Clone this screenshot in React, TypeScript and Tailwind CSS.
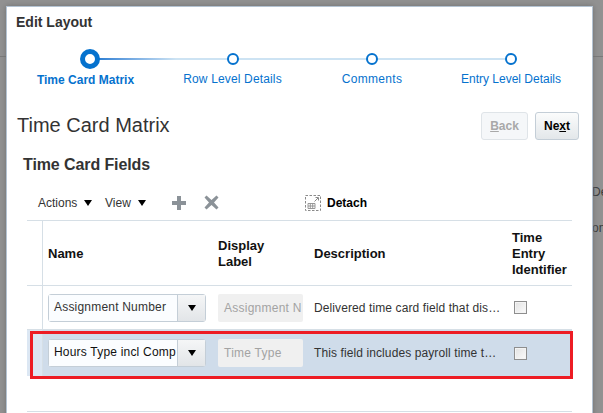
const FONT = "font-['Liberation_Sans',Arial,sans-serif]";

const STEPS = [
  { label: "Time Card Matrix", width: "w-[145px]", labelClass: "-translate-x-[4px] translate-y-[1px] font-bold" },
  { label: "Row Level Details", width: "w-[141px]", labelClass: "tracking-[0.15px]" },
  { label: "Comments", width: "w-[138px]", labelClass: "tracking-[0.3px]" },
  { label: "Entry Level Details", width: "w-[140px]", labelClass: "" },
];

function Stepper() {
  return (
    <div className="flex h-[49px] pl-[10px]">
      {STEPS.map((step, i) => (
        <div key={step.label} className={`relative flex shrink-0 flex-col items-center ${step.width}`}>
          {i === 0 && (
            <div className="absolute left-[72px] top-[10px] h-[2px] w-[145px] bg-gradient-to-r from-[#0572ce] via-[#cde3f3] via-60% to-[#cde3f3]" />
          )}
          {i > 0 && i < 3 && (
            <div className="absolute left-[70px] top-[10px] h-[2px] w-[140px] bg-[#cde3f3]" />
          )}
          <div className="relative flex h-[21px] items-center justify-center">
            {i === 0 ? (
              <div className="h-5 w-5 rounded-full border-[5px] border-[#0572ce] bg-white" />
            ) : (
              <div className="h-3 w-3 rounded-full border-2 border-[#0572ce] bg-white" />
            )}
          </div>
          <div className={`mt-[3px] whitespace-nowrap text-xs leading-[14px] text-[#0572ce] ${step.labelClass}`}>
            {step.label}
          </div>
        </div>
      ))}
    </div>
  );
}

function Triangle() {
  return <span className="ml-[7px] inline-block h-0 w-0 border-x-[4.5px] border-t-[6px] border-x-transparent border-t-black" />;
}

function DetachIcon() {
  return (
    <svg width="16" height="16" viewBox="0 0 16 16" fill="none">
      <rect x="0.5" y="0.5" width="15" height="15" stroke="#8a8a8a" strokeDasharray="2.5 1.5" />
      <path d="M3 8.5h7v5H3zM3 11h7M5.3 8.5v5M7.7 8.5v5" stroke="#8f8f8f" strokeWidth="0.9" />
      <path d="M9.500 6.500l3.500-3.500M10.500 2.500H13.500V5.500" stroke="#8a8a8a" strokeWidth="1" />
    </svg>
  );
}

function Toolbar() {
  return (
    <div className="ml-[20px] flex h-[33px] items-center pb-[2px] text-xs text-[#333]">
      <div className="ml-[11px] flex w-[67px] items-center">
        Actions
        <Triangle />
      </div>
      <div className="flex w-[67px] items-center">
        View
        <Triangle />
      </div>
      <svg width="14" height="14" viewBox="0 0 14 14">
        <path d="M5 0h4v5h5v4H9v5H5V9H0V5h5z" fill="#8b9298" />
      </svg>
      <svg width="15" height="15" viewBox="0 0 15 15" className="ml-[18px]">
        <path d="M2.500 0.500L7.500 5l5-4.500 2 2L10 7.500l4.500 5-2 2-5-4.500-5 4.500-2-2L5 7.500 0.500 2.500z" fill="#8b9298" />
      </svg>
      <div className="ml-[86px] flex items-center gap-[6px]">
        <DetachIcon />
        <span className="font-bold text-black">Detach</span>
      </div>
    </div>
  );
}

function SelectBox({ value, selected }: { value: string; selected?: boolean }) {
  return (
    <div className="flex h-[28px] w-[158px] rounded-[3px] border border-[#c4ced7] bg-white">
      <div className={`flex-1 overflow-hidden whitespace-nowrap bg-[#fbfdff] pl-[5px] pt-[5px] text-xs leading-[14px] tracking-[0.2px] ${selected ? "text-[#111]" : "text-[#333]"}`}>
        {value}
      </div>
      <div className="flex w-[28px] items-center justify-center border-l border-[#c4ced7] bg-gradient-to-b from-[#f5f6f7] to-[#e2e5e8]">
        <span className="h-0 w-0 border-x-[4.5px] border-t-[6px] border-x-transparent border-t-black" />
      </div>
    </div>
  );
}

function Row({
  name,
  label,
  description,
  selected,
}: {
  name: string;
  label: string;
  description: string;
  selected?: boolean;
}) {
  return (
    <div className={`flex items-center text-xs ${selected ? "h-[46px] bg-[#cfdcea]" : "h-[44px] border-b border-[#d6dfe6]"}`}>
      <div className={`h-full w-[16px] shrink-0 border-r border-[#d6dfe6] ${selected ? "bg-[#dce7f3]" : ""}`} />
      <div className="w-[170px] shrink-0 pl-[5px]">
        <SelectBox value={name} selected={selected} />
      </div>
      <div className="w-[95px] shrink-0 pl-[5px]">
        <div className="h-[28px] w-[85px] overflow-hidden whitespace-nowrap rounded-[2px] bg-[#f0f0f0] pl-[6px] pt-[7px] leading-[14px] tracking-[0.25px] text-[#a3a3a3]">
          {label}
        </div>
      </div>
      <div className="w-[199px] shrink-0 truncate pl-[6px] pr-[6px] tracking-[0.1px] text-[#333]">{description}</div>
      <div className="flex-1 pl-[7px]">
        <div className="h-[13px] w-[13px] border border-[#8e8e8e] bg-gradient-to-br from-[#e2e2e2] to-[#fbfbfb] shadow-[inset_0_0_0_1px_#f4f4f4]" />
      </div>
    </div>
  );
}

function FieldsTable() {
  return (
    <div className="relative ml-[20px] mr-[20px]">
      <div className="flex h-[66px] items-center border-y border-[#d6dfe6] pt-[2px] text-[13px] font-bold leading-4 text-[#111]">
        <div className="-mt-[2px] h-[66px] w-[16px] shrink-0 border-r border-[#d6dfe6]" />
        <div className="w-[170px] shrink-0 pl-[5px]">Name</div>
        <div className="w-[95px] shrink-0 pl-[5px]">
          Display
          <br />
          Label
        </div>
        <div className="w-[199px] shrink-0 pl-[6px]">Description</div>
        <div className="flex-1 pl-[5px]">
          Time
          <br />
          Entry
          <br />
          Identifier
        </div>
      </div>
      <Row
        name="Assignment Number"
        label="Assignment N"
        description="Delivered time card field that displays the assignment"
      />
      <Row
        name="Hours Type incl Comp"
        label="Time Type"
        description="This field includes payroll time types and"
        selected
      />
      <div className="absolute left-[3px] top-[111px] h-[48px] w-[543px] border-[3px] border-[#ed1c24]" />
      <div className="mt-[35px] h-px bg-[#d6dfe6]" />
    </div>
  );
}

export default function App() {
  return (
    <div className={`relative h-[413px] w-[603px] overflow-hidden bg-[#929292] ${FONT}`}>
      {/* page behind the dialog */}
      <div className="absolute left-0 top-[56px] h-px w-full bg-[#7a7a7a]" />
      <div className="absolute left-[592px] top-[185px] text-xs leading-[14px] text-[#3a3a3a]">De</div>
      <div className="absolute left-[592px] top-[221px] text-xs leading-[14px] text-[#3a3a3a]">on</div>

      <div className="relative ml-[6px] mt-[6px] h-[420px] w-[587px] border-l border-r border-t border-[#b4c3d2] bg-white shadow-[0_0_6px_#707070]">
        <div className="px-[9px] pt-[5px] text-sm font-bold leading-[20px] text-[#333]">Edit Layout</div>
        <div className="mt-[16px]">
          <Stepper />
        </div>

        <div className="mt-[15px] flex h-[28px] items-center justify-between pl-[10px] pr-[13px]">
          <div className="pb-[2px] text-xl leading-[28px] text-[#333]">Time Card Matrix</div>
          <div className="flex gap-[7px] text-xs font-bold">
            <div className="flex h-[28px] w-[47px] items-center justify-center rounded-[3px] border border-[#dfe4e8] bg-[#f5f7f9] text-[#a8a8a8]">
              <span><u>B</u>ack</span>
            </div>
            <div className="flex h-[28px] w-[44px] items-center justify-center rounded-[3px] border border-[#c4ced7] bg-gradient-to-b from-[#fbfcfc] to-[#e3e7ea] text-black">
              <span>Ne<u>x</u>t</span>
            </div>
          </div>
        </div>

        <div className="ml-[16px] mt-[15px] h-[20px] text-base font-bold leading-[20px] tracking-[-0.1px] text-[#333]">Time Card Fields</div>
        <div className="mt-[12px]">
          <Toolbar />
        </div>
        <FieldsTable />
      </div>
    </div>
  );
}
